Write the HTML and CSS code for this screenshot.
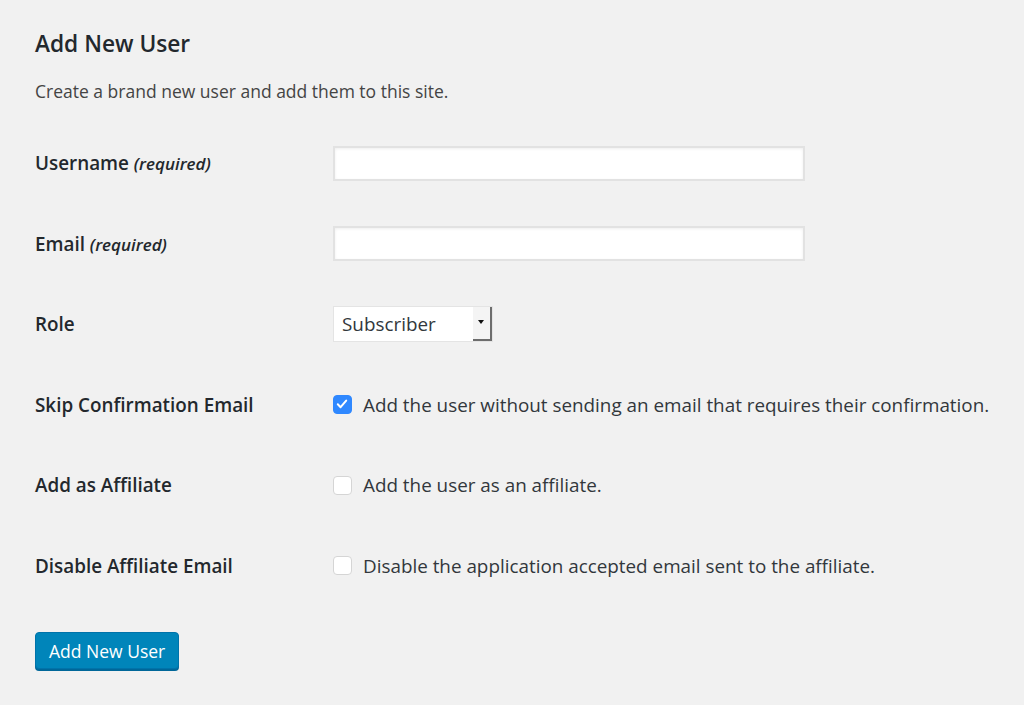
FILE: index.html
```html
<!DOCTYPE html>
<html>
<head>
<meta charset="utf-8">
<link rel="stylesheet" href="styles.css">
</head>
<body>
<div class="wrap">
  <h2 class="title">Add New User</h2>
  <p class="desc">Create a brand new user and add them to this site.</p>
  <div class="form">
    <div class="row">
      <div class="label">Username <em>(required)</em></div>
      <div class="field"><input class="text" type="text"></div>
    </div>
    <div class="row">
      <div class="label">Email <em>(required)</em></div>
      <div class="field"><input class="text" type="text"></div>
    </div>
    <div class="row">
      <div class="label">Role</div>
      <div class="field">
        <div class="select"><span class="select-value">Subscriber</span><span class="select-arrow"></span></div>
      </div>
    </div>
    <div class="row">
      <div class="label">Skip Confirmation Email</div>
      <div class="field"><span class="check checked"><svg viewBox="0 0 18 18" width="18" height="18"><path d="M4.8 9.3 L7.6 12.2 L13.2 5.6" fill="none" stroke="#fff" stroke-width="2" stroke-linecap="round" stroke-linejoin="round"/></svg></span><span class="ctext">Add the user without sending an email that requires their confirmation.</span></div>
    </div>
    <div class="row">
      <div class="label">Add as Affiliate</div>
      <div class="field"><span class="check"></span><span class="ctext">Add the user as an affiliate.</span></div>
    </div>
    <div class="row">
      <div class="label">Disable Affiliate Email</div>
      <div class="field"><span class="check"></span><span class="ctext">Disable the application accepted email sent to the affiliate.</span></div>
    </div>
  </div>
  <div class="submit"><button class="button">Add New User</button></div>
</div>
</body>
</html>
```
FILE: styles.css
```css
html, body {
  margin: 0;
  padding: 0;
  background: #f1f1f1;
}
body {
  font-family: "Open Sans", "Liberation Sans", sans-serif;
  color: #23282d;
  width: 1024px;
  height: 705px;
  overflow: hidden;
}
.wrap {
  padding: 29px 0 0 35px;
}
.title {
  margin: 0;
  font-size: 22.7px;
  font-weight: 600;
  line-height: 30px;
  color: #23282d;
}
.desc {
  margin: 20px 0 0 0;
  font-size: 17.5px;
  line-height: 24px;
  color: #444;
}
.form {
  margin-top: 20px;
}
.row {
  display: flex;
  align-items: center;
  height: 80.5px;
}
.label {
  width: 298px;
  font-size: 18.85px;
  font-weight: 600;
  color: #23282d;
}
.label em {
  font-size: 17px;
}
.field {
  display: flex;
  align-items: center;
}
.text {
  box-sizing: border-box;
  width: 472px;
  height: 35px;
  margin: 0;
  border: 2px solid #e2e2e2;
  background: #fff;
  box-shadow: inset 0 1px 3px rgba(0,0,0,0.07);
  outline: none;
}
.select {
  box-sizing: border-box;
  display: flex;
  width: 160px;
  height: 36px;
  border: 1px solid #e4e4e4;
  background: #fff;
}
.select-value {
  flex: 1;
  font-size: 18.85px;
  line-height: 34px;
  padding-left: 8px;
  color: #32373c;
}
.select-arrow {
  position: relative;
  width: 19px;
  height: 34px;
  background: #f4f4f4;
  border-right: 2px solid #6d6d6d;
  border-bottom: 2px solid #6d6d6d;
  box-sizing: border-box;
}
.select-arrow::after {
  content: "";
  position: absolute;
  left: 5px;
  top: 13px;
  border-left: 3.5px solid transparent;
  border-right: 3.5px solid transparent;
  border-top: 4px solid #111;
}
.check {
  box-sizing: border-box;
  display: inline-block;
  width: 19px;
  height: 19px;
  border: 1px solid #d5d5d5;
  border-radius: 4px;
  background: #fff;
  margin-right: 11px;
}
.check.checked {
  background: #2f88ff;
  border-color: #2f88ff;
}
.check svg {
  display: block;
  margin: -1px;
}
.ctext {
  font-size: 18.85px;
  color: #32373c;
}
.submit {
  margin-top: 26px;
}
.button {
  box-sizing: border-box;
  height: 37px;
  padding: 0 13px;
  font-family: "Open Sans", "Liberation Sans", sans-serif;
  font-size: 17.5px;
  color: #fff;
  background: #0085ba;
  border: 1px solid #0073aa;
  border-radius: 4px;
  box-shadow: 0 2px 0 #006799;
}
```
